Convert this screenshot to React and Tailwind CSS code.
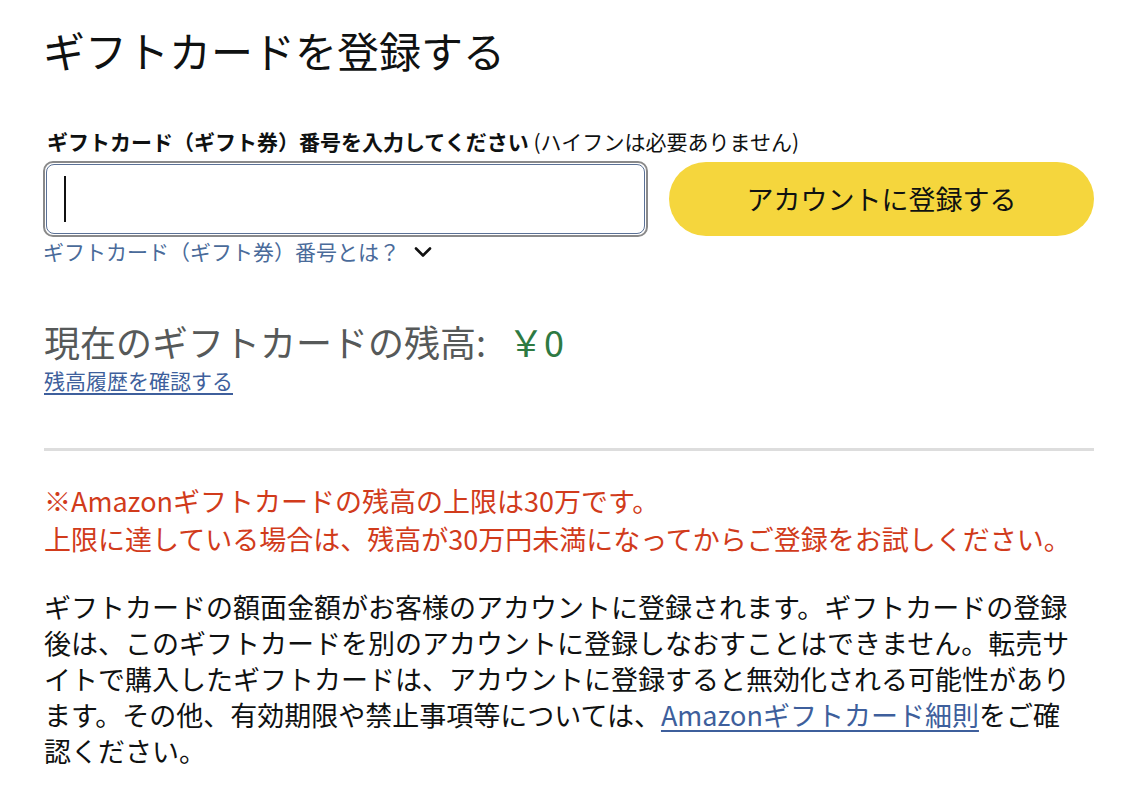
import React from "react";

const font = { fontFamily: '"Noto Sans CJK JP", "Noto Sans", sans-serif' };

function Chevron() {
  return (
    <svg width="18" height="12" viewBox="0 0 18 12" className="ml-[14px]">
      <path d="M2 2.5 L9 9.5 L16 2.5" fill="none" stroke="#111" strokeWidth="2.6" strokeLinecap="round" strokeLinejoin="round" />
    </svg>
  );
}

export default function App() {
  return (
    <div className="bg-white min-h-[806px] text-[#0f1111]" style={font}>
      <div className="ml-[43px] w-[1051px] pt-[22px]">
        <h1 className="text-[42px] leading-[56px] font-normal">ギフトカードを登録する</h1>

        <div className="mt-[49px] text-[21px] leading-[28px] pl-[4px]">
          <span className="font-bold">ギフトカード（ギフト券）番号を入力してください</span>
          <span> (ハイフンは必要ありません)</span>
        </div>

        {/* code input + submit */}
        <div className="mt-[6px] flex items-center gap-[21px]">
          <div className="flex-1 h-[76px] rounded-[10px] border-2 border-[#8a8a8a] p-[1px]">
            <div className="h-full rounded-[8px] border border-[#5b7196] flex items-center pl-[17px]">
              <span className="block w-[2px] h-[46px] bg-[#111]" />
            </div>
          </div>
          <button className="w-[425px] h-[74px] rounded-full bg-[#f5d63d] text-[27px] text-[#0f1111]">
            アカウントに登録する
          </button>
        </div>

        <div className="flex items-center h-[28px] mt-px text-[21px] text-[#4a6b9a]">
          ギフトカード（ギフト券）番号とは？
          <Chevron />
        </div>

        {/* balance */}
        <div className="mt-[52px] pl-px text-[36px] leading-[46px] text-[#565959]">
          現在のギフトカードの残高:<span className="text-[#2e7a42] ml-[22px]">￥0</span>
        </div>
        <a className="inline-block mt-[2px] pl-px text-[21px] leading-[28px] text-[#3e5f9c] underline underline-offset-[4px]">
          残高履歴を確認する
        </a>

        <div className="mt-[54px] h-[3px] bg-[#dddddd] ml-px" />

        <p className="mt-[31px] pl-px text-[27px] leading-[38px] text-[#d13b1b]">
          ※Amazonギフトカードの残高の上限は30万です。
          <br />
          上限に達している場合は、残高が30万円未満になってからご登録をお試しください。
        </p>

        <p className="mt-[31px] pl-px w-[1040px] text-[27px] leading-[36px] text-[#0f1111]">
          ギフトカードの額面金額がお客様のアカウントに登録されます。ギフトカードの登録後は、このギフトカードを別のアカウントに登録しなおすことはできません。転売サイトで購入したギフトカードは、アカウントに登録すると無効化される可能性があります。その他、有効期限や禁止事項等については、
          <a className="text-[#3e5f9c] underline underline-offset-[4px]">Amazonギフトカード細則</a>
          をご確認ください。
        </p>
      </div>
    </div>
  );
}
